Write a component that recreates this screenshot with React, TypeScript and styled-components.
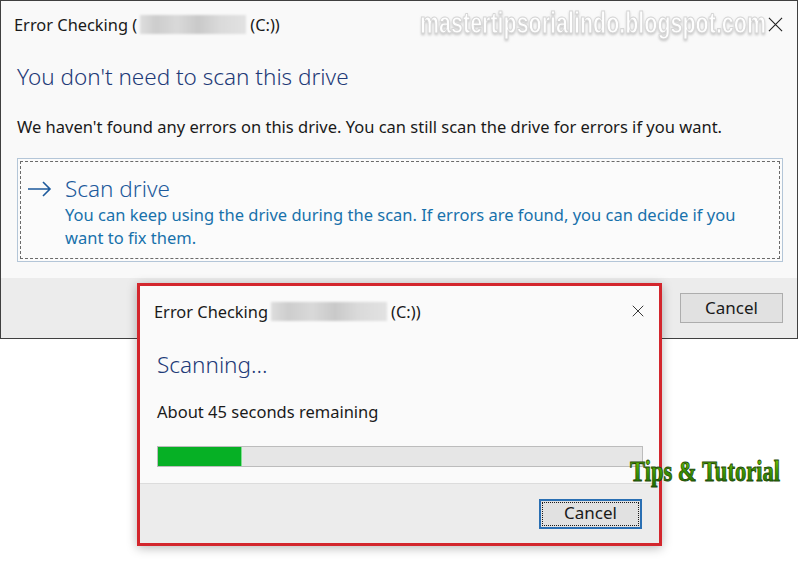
import React from "react";
import styled, { createGlobalStyle } from "styled-components";

const Global = createGlobalStyle`
  html, body { margin: 0; padding: 0; background: #ffffff; }
  body { font-family: "Noto Sans", "Open Sans", sans-serif; color: #1a1a1a; }
  * { box-sizing: border-box; }
`;

const Page = styled.div`
  position: relative;
  width: 800px;
  height: 562px;
  overflow: hidden;
  background: #ffffff;
`;

const BackWindow = styled.div`
  width: 798px;
  border: 1px solid #404040;
  background: #f9f9f9;
  display: flex;
  flex-direction: column;
`;

const FrontWindow = styled.div`
  position: absolute;
  left: 137px;
  top: 283px;
  width: 525px;
  height: 263px;
  border: 3px solid #d3262d;
  background: #fafafa;
  display: flex;
  flex-direction: column;
  box-shadow: 0 2px 10px rgba(0, 0, 0, 0.28);
`;

const TitleBar = styled.div<{ $h: number; $pl: number; $pr: number }>`
  height: ${(p) => p.$h}px;
  flex: none;
  display: flex;
  align-items: center;
  justify-content: space-between;
  padding: 0 ${(p) => p.$pr}px 0 ${(p) => p.$pl}px;
`;

const TitleText = styled.div`
  display: flex;
  align-items: center;
  font-size: 16.4px;
  color: #1a1a1a;
  white-space: nowrap;
`;

const Redacted = styled.span<{ $w: number }>`
  display: inline-block;
  width: ${(p) => p.$w}px;
  height: 19px;
  margin: 0 4px 0 3px;
  background: linear-gradient(
    90deg,
    #dedede 0%,
    #cdcdcd 15%,
    #d9d9d9 35%,
    #c9c9c9 55%,
    #dadada 75%,
    #e2e2e2 100%
  );
  filter: blur(1.2px);
`;

const CloseIcon = styled.svg<{ $s: number }>`
  width: ${(p) => p.$s}px;
  height: ${(p) => p.$s}px;
  display: block;
  position: relative;
  z-index: 2;
`;

const Body = styled.div<{ $pad: string }>`
  padding: ${(p) => p.$pad};
  display: flex;
  flex-direction: column;
`;

const Heading = styled.div`
  font-size: 22.5px;
  line-height: 30px;
  font-weight: 300;
  color: #1f3b78;
  white-space: nowrap;
`;

const Text = styled.div<{ $mt: number }>`
  margin-top: ${(p) => p.$mt}px;
  font-size: 16.5px;
  line-height: 22px;
  color: #1a1a1a;
  white-space: nowrap;
`;

const CommandLink = styled.div`
  margin-top: 20px;
  height: 104px;
  border: 1px solid #b4c6d8;
  padding: 2px;
  background: #fbfbfb;
`;

const FocusRect = styled.div`
  height: 100%;
  border: 1px dashed #6a6a6a;
  display: grid;
  grid-template-columns: 44px 1fr;
  grid-template-rows: 28px auto;
  align-content: start;
  padding-top: 13px;
`;

const ArrowCell = styled.div`
  display: flex;
  align-items: center;
  padding-left: 6px;
`;

const LinkTitle = styled.div`
  font-size: 22.5px;
  line-height: 28px;
  font-weight: 300;
  color: #1d5a9c;
`;

const LinkDesc = styled.div`
  grid-column: 2;
  font-size: 16.5px;
  line-height: 23px;
  color: #1871ab;
  padding-right: 40px;
`;

const Footer = styled.div<{ $pr: number; $line?: boolean }>`
  height: 60px;
  flex: none;
  margin-top: auto;
  background: #ececec;
  border-top: ${(p) => (p.$line ? "1px solid #dcdcdc" : "none")};
  display: flex;
  align-items: center;
  justify-content: flex-end;
  padding-right: ${(p) => p.$pr}px;
`;

const Button = styled.button<{ $focused?: boolean }>`
  position: relative;
  width: 103px;
  height: 30px;
  font-family: "Noto Sans", "Open Sans", sans-serif;
  font-size: 17px;
  color: #1a1a1a;
  background: #e1e1e1;
  border: 1px solid ${(p) => (p.$focused ? "#2a6fb3" : "#adadad")};
  box-shadow: ${(p) => (p.$focused ? "inset 0 0 0 1px #2a6fb3" : "none")};
  padding: 0 0 2px;
  &::after {
    content: "";
    display: ${(p) => (p.$focused ? "block" : "none")};
    position: absolute;
    inset: 2px;
    border: 1px dotted #1a1a1a;
  }
`;

const Progress = styled.div`
  margin-top: 23px;
  height: 21px;
  border: 1px solid #bcbcbc;
  background: #e6e6e6;
`;

const ProgressFill = styled.div`
  height: 100%;
  background: #06b025;
  border-right: 1px solid #7fe08f;
`;

const Overlay = styled.svg<{ $x: number; $y: number }>`
  position: absolute;
  left: ${(p) => p.$x}px;
  top: ${(p) => p.$y}px;
  overflow: visible;
  pointer-events: none;
`;

const Close = ({ size }: { size: number }) => (
  <CloseIcon $s={size} viewBox="0 0 16 16">
    <path d="M1 1 L15 15 M15 1 L1 15" stroke="#222" strokeWidth="1.2" fill="none" />
  </CloseIcon>
);

const Arrow = () => (
  <svg width="25" height="16" viewBox="0 0 25 16">
    <path d="M1 8 H23 M16 1 L23 8 L16 15" stroke="#1d5a9c" strokeWidth="1.6" fill="none" />
  </svg>
);

export default function App() {
  const progress = 17.3;
  return (
    <Page>
      <Global />
      <BackWindow>
        <TitleBar $h={46} $pl={13} $pr={14}>
          <TitleText>
            Error Checking (<Redacted $w={106} />(C:))
          </TitleText>
          <Close size={15} />
        </TitleBar>
        <Body $pad="15px 14px 16px 16px">
          <Heading>You don't need to scan this drive</Heading>
          <Text $mt={24}>
            We haven't found any errors on this drive. You can still scan the drive for errors if you want.
          </Text>
          <CommandLink>
            <FocusRect>
              <ArrowCell>
                <Arrow />
              </ArrowCell>
              <LinkTitle>Scan drive</LinkTitle>
              <LinkDesc>
                You can keep using the drive during the scan. If errors are found, you can decide if you want to fix them.
              </LinkDesc>
            </FocusRect>
          </CommandLink>
        </Body>
        <Footer $pr={14}>
          <Button>Cancel</Button>
        </Footer>
      </BackWindow>

      <Overlay $x={418} $y={4} width="380" height="40">
        <defs>
          <filter id="wmShadow" x="-5%" y="-20%" width="110%" height="150%">
            <feDropShadow dx="0" dy="1.5" stdDeviation="1.2" floodColor="#b0b0b0" floodOpacity="0.7" />
          </filter>
        </defs>
        <text
          x="2"
          y="29"
          textLength="346"
          lengthAdjust="spacingAndGlyphs"
          fontFamily="Liberation Sans, Arial, sans-serif"
          fontWeight="bold"
          fontSize="30"
          fill="#fefefe"
          stroke="#d6d6d6"
          strokeWidth="1.1"
          filter="url(#wmShadow)"
        >
          mastertipsorialindo.blogspot.com
        </text>
      </Overlay>

      <FrontWindow>
        <TitleBar $h={50} $pl={14} $pr={15}>
          <TitleText>
            Error Checking <Redacted $w={116} />(C:))
          </TitleText>
          <Close size={12} />
        </TitleBar>
        <Body $pad="14px 16px 16px 17px">
          <Heading>Scanning...</Heading>
          <Text $mt={21}>About 45 seconds remaining</Text>
          <Progress>
            <ProgressFill style={{ width: `${progress}%` }} />
          </Progress>
        </Body>
        <Footer $pr={17} $line>
          <Button $focused>Cancel</Button>
        </Footer>
      </FrontWindow>

      <Overlay $x={628} $y={448} width="200" height="48">
        <defs>
          <linearGradient id="tipsGrad" x1="0" y1="0" x2="0" y2="1">
            <stop offset="0" stopColor="#8ad400" />
            <stop offset="0.5" stopColor="#3f9a00" />
            <stop offset="1" stopColor="#1f6a00" />
          </linearGradient>
        </defs>
        <text
          x="2"
          y="33"
          textLength="150"
          lengthAdjust="spacingAndGlyphs"
          fontFamily="Liberation Serif, Times New Roman, serif"
          fontWeight="bold"
          fontSize="30"
          fill="url(#tipsGrad)"
          stroke="#1d4a0a"
          strokeWidth="0.9"
        >
          Tips &amp; Tutorial
        </text>
      </Overlay>
    </Page>
  );
}
